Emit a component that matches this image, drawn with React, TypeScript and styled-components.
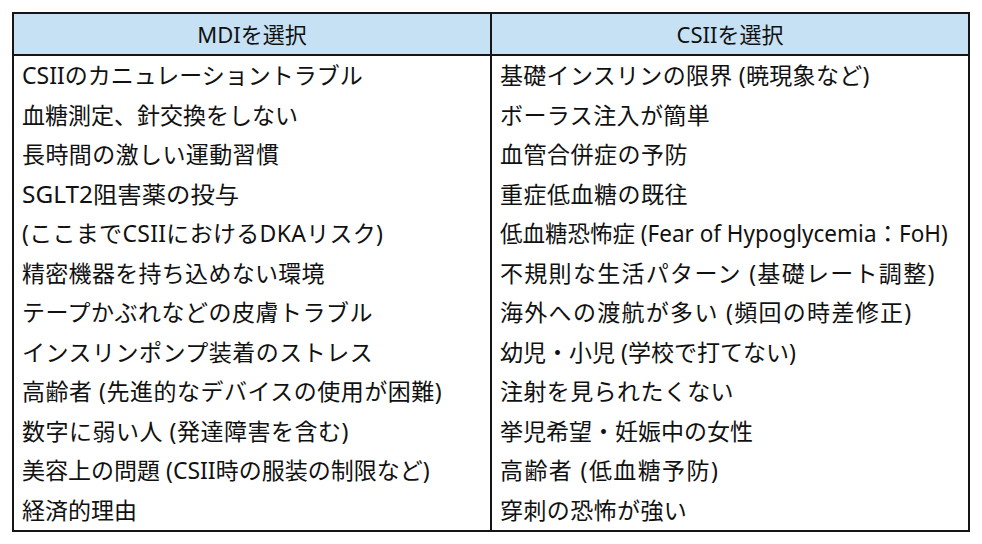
import React from "react";
import styled, { createGlobalStyle } from "styled-components";

const Global = createGlobalStyle`
  html, body { margin: 0; padding: 0; background: #ffffff; }
  body { font-family: "Noto Sans", "Noto Sans CJK JP", sans-serif; color: #111; }
`;

const Page = styled.div`
  padding: 12px 12px 0 12px;
  width: 982px;
  box-sizing: border-box;
`;

const Table = styled.div`
  width: 958px;
  box-sizing: border-box;
  border: 2px solid #151515;
  display: grid;
  grid-template-columns: 1fr 2px 1fr;
`;

const Column = styled.div`
  display: flex;
  flex-direction: column;
  overflow: hidden;
`;

const Divider = styled.div`
  background: #151515;
`;

const Header = styled.div`
  height: 40px;
  background: #c6e0f4;
  border-bottom: 2px solid #151515;
  display: flex;
  align-items: center;
  justify-content: center;
  font-size: 22px;
  line-height: 1;
`;

const Cell = styled.div`
  height: 39.5px;
  display: flex;
  align-items: center;
  padding-left: 8px;
  font-size: 23px;
  line-height: 1;
  white-space: nowrap;
`;

const Text = styled.span<{ $squeeze?: number; $track?: number }>`
  display: inline-block;
  transform-origin: left center;
  transform: scaleX(${(p) => p.$squeeze ?? 1});
  letter-spacing: ${(p) => p.$track ?? 0}px;
`;

type Row = { t: string; s?: number; k?: number };

const mdi: Row[] = [
  { t: "CSIIのカニュレーショントラブル" },
  { t: "血糖測定、針交換をしない" },
  { t: "長時間の激しい運動習慣", k: 0.4 },
  { t: "SGLT2阻害薬の投与", s: 1.06 },
  { t: "(ここまでCSIIにおけるDKAリスク)", k: 0.3 },
  { t: "精密機器を持ち込めない環境", k: 0.3 },
  { t: "テープかぶれなどの皮膚トラブル", k: 0.5 },
  { t: "インスリンポンプ装着のストレス", k: 0.5 },
  { t: "高齢者 (先進的なデバイスの使用が困難)", k: 0.5 },
  { t: "数字に弱い人 (発達障害を含む)", k: 0.5 },
  { t: "美容上の問題 (CSII時の服装の制限など)" },
  { t: "経済的理由" },
];

const csii: Row[] = [
  { t: "基礎インスリンの限界 (暁現象など)", k: 0.3 },
  { t: "ボーラス注入が簡単", k: 0.4 },
  { t: "血管合併症の予防", k: 0.5 },
  { t: "重症低血糖の既往", k: 0.5 },
  { t: "低血糖恐怖症 (Fear of Hypoglycemia：FoH)", s: 0.978 },
  { t: "不規則な生活パターン (基礎レート調整)", k: 1.3 },
  { t: "海外への渡航が多い (頻回の時差修正)", k: 1.3 },
  { t: "幼児・小児 (学校で打てない)" },
  { t: "注射を見られたくない", k: 0.4 },
  { t: "挙児希望・妊娠中の女性" },
  { t: "高齢者 (低血糖予防)", k: 1.4 },
  { t: "穿刺の恐怖が強い", k: 0.4 },
];

export default function App() {
  return (
    <>
      <Global />
      <Page>
        <Table>
          <Column>
            <Header>MDIを選択</Header>
            {mdi.map((r) => (
              <Cell key={r.t}>
                <Text $squeeze={r.s} $track={r.k}>{r.t}</Text>
              </Cell>
            ))}
          </Column>
          <Divider />
          <Column>
            <Header>CSIIを選択</Header>
            {csii.map((r) => (
              <Cell key={r.t}>
                <Text $squeeze={r.s} $track={r.k}>{r.t}</Text>
              </Cell>
            ))}
          </Column>
        </Table>
      </Page>
    </>
  );
}
